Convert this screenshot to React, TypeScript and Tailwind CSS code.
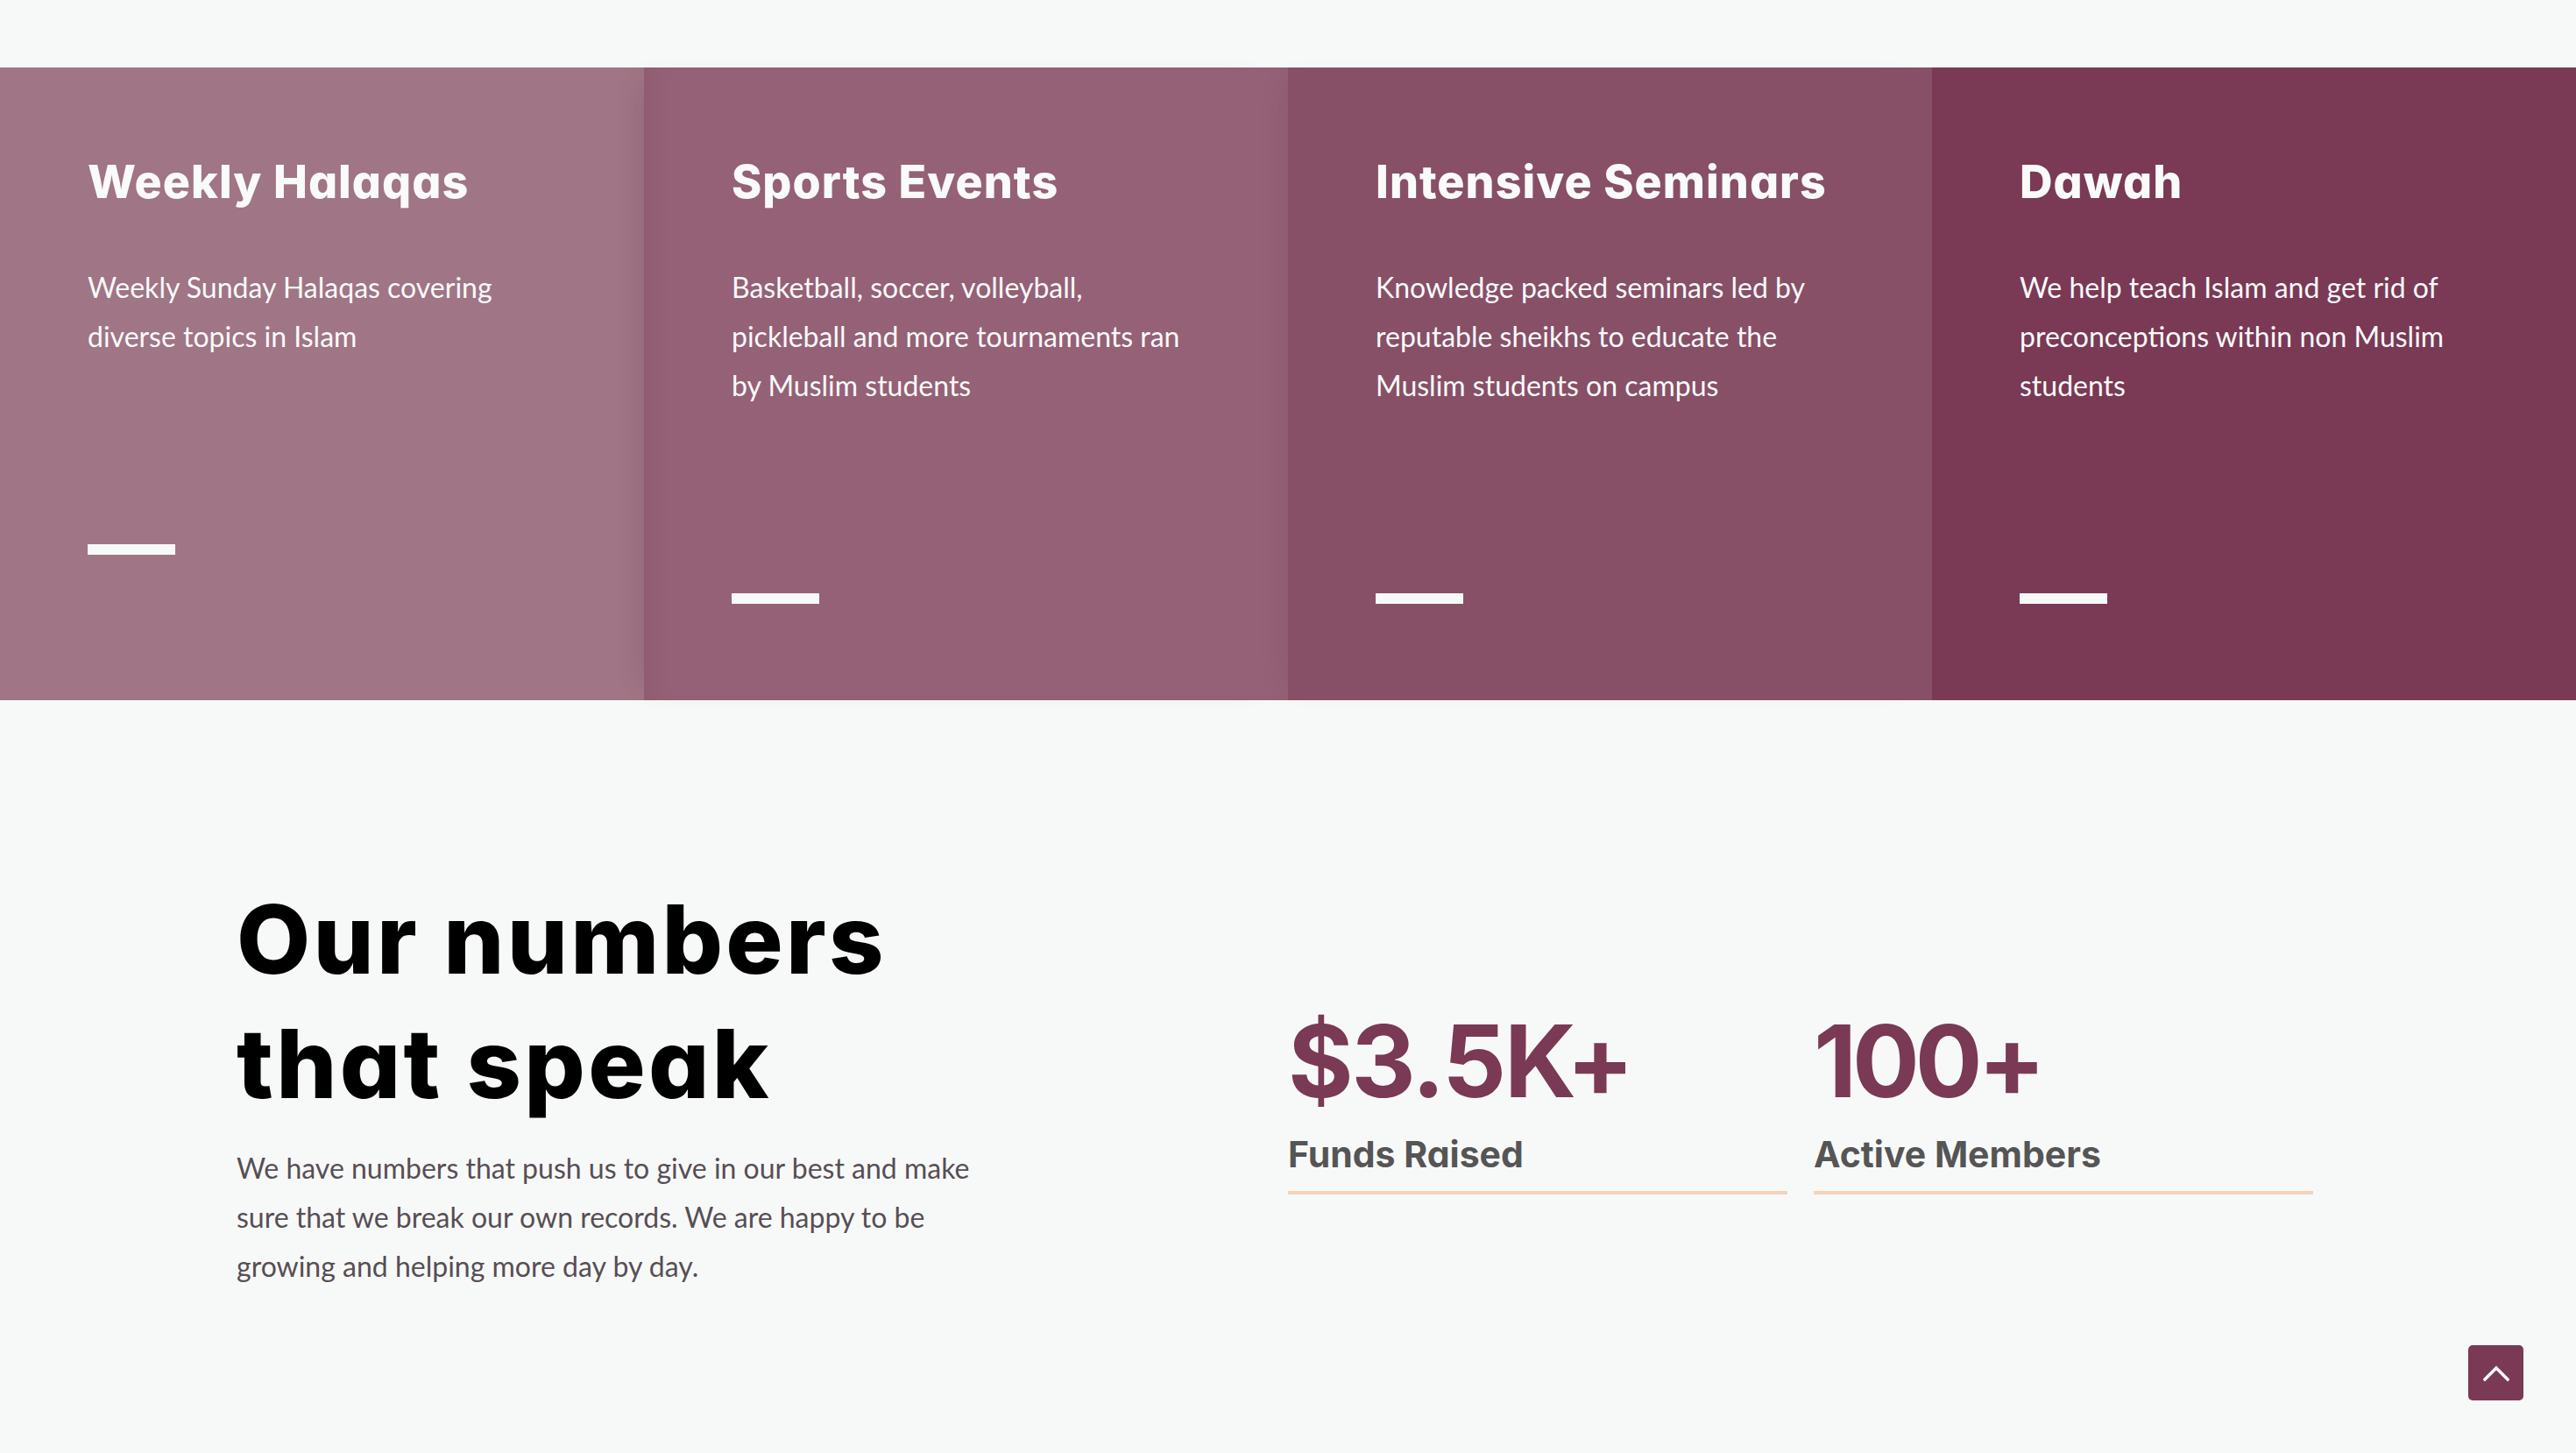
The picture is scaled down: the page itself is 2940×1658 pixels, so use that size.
import React from "react";

const cards = [
  {
    title: "Weekly Halaqas",
    lines: ["Weekly Sunday Halaqas covering", "diverse topics in Islam"],
    cls: "bg-[#a07585]",
  },
  {
    title: "Sports Events",
    lines: [
      "Basketball, soccer, volleyball,",
      "pickleball and more tournaments ran",
      "by Muslim students",
    ],
    cls: "bg-[#956176] shadow-[-20px_0_30px_-18px_rgba(60,20,40,0.14),inset_20px_0_30px_-20px_rgba(60,20,40,0.10)]",
  },
  {
    title: "Intensive Seminars",
    lines: [
      "Knowledge packed seminars led by",
      "reputable sheikhs to educate the",
      "Muslim students on campus",
    ],
    cls: "bg-[#875067] shadow-[-20px_0_30px_-18px_rgba(60,20,40,0.10)]",
  },
  {
    title: "Dawah",
    lines: [
      "We help teach Islam and get rid of",
      "preconceptions within non Muslim",
      "students",
    ],
    cls: "bg-[#7a3955]",
  },
];

const heading = "font-['Inter',sans-serif] [font-feature-settings:'cv11']";
const body = "font-['Lato','Noto_Sans',sans-serif]";

const stats = [
  { n: "$3.5K+", l: "Funds Raised", t: "tracking-[-0.02em]" },
  { n: "100+", l: "Active Members", t: "tracking-[-0.045em]" },
];

export default function App() {
  return (
    <div className="min-h-[1658px] w-full bg-[#f7f9f8] pt-[77px]">
      <section className="grid grid-cols-4">
        {cards.map((c) => (
          <div
            key={c.title}
            className={`relative flex flex-col px-[100px] pt-[99px] pb-[110px] ${c.cls}`}
          >
            <h3
              className={`${heading} text-[52px] leading-[64px] font-extrabold tracking-[0.02em] text-[#f9fafa]`}
            >
              {c.title}
            </h3>
            <p className={`${body} mt-[60px] text-[32px] leading-[56px] text-[#f9fafa]`}>
              {c.lines.map((l, i) => (
                <React.Fragment key={i}>
                  {l}
                  {i < c.lines.length - 1 && <br />}
                </React.Fragment>
              ))}
            </p>
            <div className="mt-[209px] h-[12px] w-[100px] bg-[#f7f9f8]" />
          </div>
        ))}
      </section>

      <section className="mx-auto grid w-[2400px] grid-cols-2 pt-[201px] pb-[180px]">
        <div>
          <h2
            className={`${heading} text-[109px] leading-[142px] font-extrabold tracking-[0.03em] text-black`}
          >
            Our numbers
            <br />
            that speak
          </h2>
          <p className={`${body} mt-[21px] text-[32px] leading-[56px] text-[#574e55]`}>
            We have numbers that push us to give in our best and make
            <br />
            sure that we break our own records. We are happy to be
            <br />
            growing and helping more day by day.
          </p>
        </div>
        <div className="mt-[142px] grid grid-cols-2 self-start">
          {stats.map((s) => (
            <div key={s.l} className="pr-[30px]">
              <div className="border-b-4 border-[#f7d2b8] pb-[17px]">
                <div
                  className={`${heading} text-[114px] leading-[137px] font-bold ${s.t} text-[#7a3955]`}
                >
                  {s.n}
                </div>
                <div
                  className={`${heading} mt-[14px] text-[41px] leading-[49px] font-bold text-[#555555]`}
                >
                  {s.l}
                </div>
              </div>
            </div>
          ))}
        </div>
      </section>

      <button
        aria-label="Scroll to top"
        className="fixed right-[60px] bottom-[60px] flex h-[63px] w-[63px] items-center justify-center rounded-[5px] bg-[#7a3955]"
      >
        <svg width="30" height="20" viewBox="0 0 30 20" fill="none">
          <polyline
            points="2,17 15,4 28,17"
            stroke="#ffffff"
            strokeWidth="3.5"
            strokeLinecap="square"
            fill="none"
          />
        </svg>
      </button>
    </div>
  );
}
